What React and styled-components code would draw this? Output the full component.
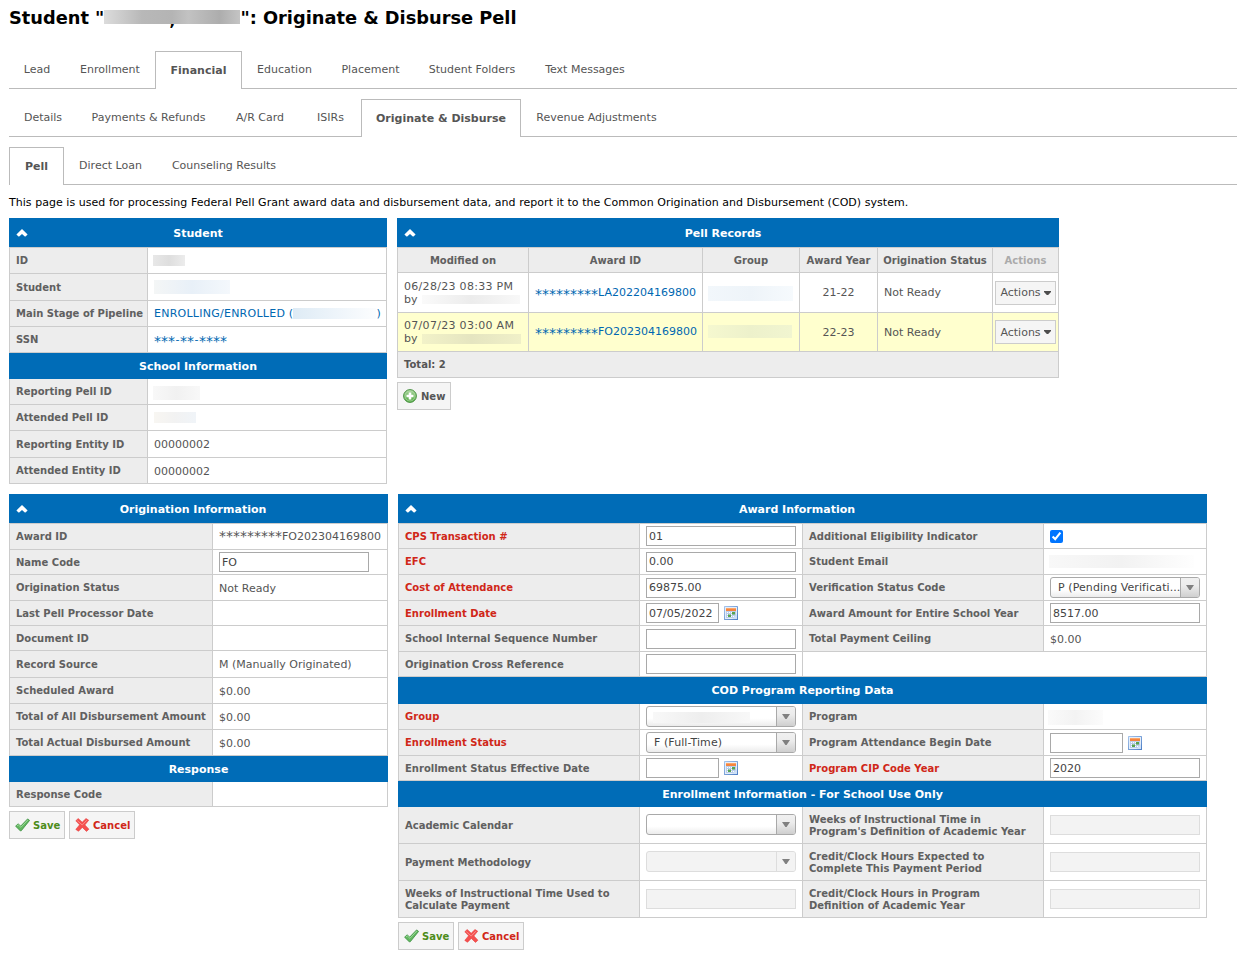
import { useState } from "react";
import styled, { createGlobalStyle, css } from "styled-components";

const mainTabs = [
	{ name: "Lead", width: 56 },
	{ name: "Enrollment", width: 90 },
	{ name: "Financial", width: 87, active: true },
	{ name: "Education", width: 85 },
	{ name: "Placement", width: 87 },
	{ name: "Student Folders", width: 116 },
	{ name: "Text Messages", width: 110 },
];

const financialTabs = [
	{ name: "Details", width: 68 },
	{ name: "Payments & Refunds", width: 143 },
	{ name: "A/R Card", width: 80 },
	{ name: "ISIRs", width: 61 },
	{ name: "Originate & Disburse", width: 160, active: true },
	{ name: "Revenue Adjustments", width: 151 },
];

const disburseTabs = [
	{ name: "Pell", width: 55, active: true },
	{ name: "Direct Loan", width: 93 },
	{ name: "Counseling Results", width: 134 },
];

const Tabs = ({ items }) => (
	<TabBar>
		{items.map((item) => (
			<Tab key={item.name} $width={item.width} $active={item.active}>
				{item.name}
			</Tab>
		))}
	</TabBar>
);

const PanelHeader = ({ title, trail = 0 }) => (
	<Header $trail={trail}>
		<Chevron viewBox="0 0 12 8">
			<path d="M6 0 11.6 5.4 9.5 7.6H8.8L6 5 3.2 7.6H2.5L.4 5.4Z" fill="#fff" />
		</Chevron>
		<HeaderTitle>{title}</HeaderTitle>
	</Header>
);

const MaskedId = ({ rest }) => (
	<>
		<Stars>*********</Stars>
		{rest}
	</>
);

const Field = ({ label, h = 26, required, children }) => (
	<Row $h={h}>
		<Label $required={required}>{label}</Label>
		<Value $text={typeof children === "string"}>{children}</Value>
	</Row>
);

const TextInput = ({ value = "", short, disabled }) => {
	const [text, setText] = useState(value);
	return (
		<Input
			type="text"
			$short={short}
			disabled={disabled}
			value={text}
			onChange={(e) => setText(e.target.value)}
		/>
	);
};

const DateInput = ({ value }) => (
	<DateGroup>
		<TextInput short value={value} />
		<svg width="14" height="14" viewBox="0 0 14 14">
			<defs>
				<linearGradient id="calEdge" x1="0" y1="0" x2="1" y2="1">
					<stop offset="0" stopColor="#a9c6ec" />
					<stop offset="1" stopColor="#4a7cc4" />
				</linearGradient>
			</defs>
			<rect width="14" height="14" rx=".6" fill="url(#calEdge)" />
			<rect x="1" y="1" width="12" height="12" fill="#e4eefa" />
			<rect x="2" y="2" width="10" height="3" fill="#f5853f" />
			<rect x="2" y="2" width="10" height="1" fill="#fba568" />
			<rect x="2" y="5" width="10" height="7" fill="#b9cdea" />
			<path
				d="M3 6h1v1H3zM5 6h1v1H5zM7 6h1v1H7zM9 6h1v1H9zM3 8h1v1H3zM5 8h1v1H5zM7 8h1v1H7zM3 10h1v1H3zM7 10h1v1H7zM9 10h1v1H9z"
				fill="#fff"
			/>
			<path d="M8 6h3v2.6H8zM4 8.4h3V11H4z" fill="#58a451" />
			<path d="M8 13 13 8v5z" fill="#cfe1f7" />
		</svg>
	</DateGroup>
);

const SelectBox = ({ disabled, children }) => (
	<Select $disabled={disabled}>
		<SelectText>{children}</SelectText>
		<SelectArrow $disabled={disabled}>
			<svg width="8" height="5" viewBox="0 0 8 5">
				<path d="M0 0h8L4.6 5H3.4Z" fill="#808080" />
			</svg>
		</SelectArrow>
	</Select>
);

const SaveCancel = () => (
	<Buttons>
		<Button $color="#4d8c1a" $width={56} $gap={2}>
			<svg width="16" height="14" viewBox="0 0 16 14">
				<path
					d="M.6 8.2 3.1 5.8l2.6 2.3L12.6.9l2 1.5L6.3 12.7H5.2Z"
					fill="#62b760"
					stroke="#3f9142"
					strokeWidth=".8"
					strokeLinejoin="round"
				/>
				<path d="M2 7.9 3.2 6.8l2.7 2.5L12.8 2" fill="none" stroke="#9ad897" />
			</svg>
			Save
		</Button>
		<Button $color="#d02718" $width={66} $gap={3}>
			<svg width="15" height="14" viewBox="0 0 15 14">
				<path
					d="M.8 2.8 3.2.5l4 3.7L11 .5l2.7 1.7-3.8 4.7 4 4.3-2.4 2.2-4.2-4L3.5 13.3.8 11.4l3.8-4.6Z"
					fill="#f5504f"
					stroke="#e8403f"
					strokeWidth=".6"
					strokeLinejoin="round"
				/>
				<path d="M2.3 2.6 7.2 7l4.6-4.8" fill="none" stroke="#fa8d8a" />
			</svg>
			Cancel
		</Button>
	</Buttons>
);

const ActionsButton = () => (
	<ActionButton>
		Actions
		<svg width="7" height="4" viewBox="0 0 7 4">
			<path d="M0 0h7v1L4.2 4H2.8L0 1Z" fill="#4d4d4d" />
		</svg>
	</ActionButton>
);

export default function App() {
	const [eligible, setEligible] = useState(true);

	return (
		<>
			<GlobalStyle />
			<Page>
				<Title>
					Student "
					<TitleMask>
						<span>,</span>
					</TitleMask>
					": Originate &amp; Disburse Pell
				</Title>
				<Tabs items={mainTabs} />
				<Tabs items={financialTabs} />
				<Tabs items={disburseTabs} />
				<Intro>
					This page is used for processing Federal Pell Grant award data and
					disbursement data, and report it to the Common Origination and
					Disbursement (COD) system.
				</Intro>

				<Columns $left={378} $gap={10}>
					<Panel>
						<PanelHeader title="Student" />
						<Body $labels={138}>
							<Field label="ID">
								<Mask $w={32} $h={11} $from="#e8e8e8" $mid="#dedede" $to="#ececec" $x={-1} $y={-1} />
							</Field>
							<Field label="Student" h={27}>
								<Mask $w={76} $h={14} $from="#f4f6f6" $mid="#e8f0f8" $to="#f4f8fc" $y={-1} />
							</Field>
							<Field label="Main Stage of Pipeline">
								<Link $spaced>ENROLLING/ENROLLED (</Link>
								<Mask $w={83} $h={11} $from="#deebf5" $mid="#edf4fa" $to="#fcfdfe" />
								<Link>)</Link>
							</Field>
							<Field label="SSN">
								<Link>
									<Stars>***</Stars>
									<Dash>-</Dash>
									<Stars>**</Stars>
									<Dash>-</Dash>
									<Stars>****</Stars>
								</Link>
							</Field>
						</Body>
						<Section>School Information</Section>
						<Body $labels={138} $plain>
							<Field label="Reporting Pell ID">
								<Mask $w={47} $h={14} $from="#f8f8f8" $mid="#f1f1f1" $to="#f8f8f8" $x={-1} $y={2} />
							</Field>
							<Field label="Attended Pell ID">
								<Mask $w={42} $h={11} $from="#f8f6f2" $mid="#f2f2f2" $to="#f0f4f8" />
							</Field>
							<Field label="Reporting Entity ID" h={27}>
								00000002
							</Field>
							<Field label="Attended Entity ID">00000002</Field>
						</Body>
					</Panel>

					<Panel $width={662}>
						<PanelHeader title="Pell Records" trail={10} />
						<Records>
							<RecordRow $h={25} $head>
								<Cell>Modified on</Cell>
								<Cell>Award ID</Cell>
								<Cell>Group</Cell>
								<Cell>Award Year</Cell>
								<Cell>Origination Status</Cell>
								<Cell $muted>Actions</Cell>
							</RecordRow>
							<RecordRow $h={40}>
								<Cell $left>
									<div>
										<Stamp>06/28/23 08:33 PM</Stamp>
										<By>
											by <Mask $w={98} $h={9} $from="#fafafa" $mid="#ececec" $to="#f8f8f8" />
										</By>
									</div>
								</Cell>
								<Cell $left>
									<Link>
										<MaskedId rest="LA202204169800" />
									</Link>
								</Cell>
								<Cell $left>
									<Mask $w={85} $h={15} $from="#f2f7fb" $mid="#eef4f9" $to="#f6fafd" $x={-1} $y={2} />
								</Cell>
								<Cell>21-22</Cell>
								<Cell $left>Not Ready</Cell>
								<Cell>
									<ActionsButton />
								</Cell>
							</RecordRow>
							<RecordRow $h={39} $current>
								<Cell $left>
									<div>
										<Stamp>07/07/23 03:00 AM</Stamp>
										<By>
											by <Mask $w={99} $h={10} $from="#f2f2c8" $mid="#e5e5c0" $to="#f0f0c8" />
										</By>
									</div>
								</Cell>
								<Cell $left>
									<Link>
										<MaskedId rest="FO202304169800" />
									</Link>
								</Cell>
								<Cell $left>
									<Mask $w={84} $h={13} $from="#f5f8cf" $mid="#edf1cb" $to="#f1f5d0" $x={-1} $y={-2} />
								</Cell>
								<Cell>22-23</Cell>
								<Cell $left>Not Ready</Cell>
								<Cell>
									<ActionsButton />
								</Cell>
							</RecordRow>
							<TotalRow>Total: 2</TotalRow>
						</Records>
						<Buttons>
							<Button $color="#555" $width={54} $gap={4}>
								<svg width="14" height="14" viewBox="0 0 14 14">
									<defs>
										<linearGradient id="addFill" x1="0" y1="0" x2="0" y2="1">
											<stop offset="0" stopColor="#a9d49c" />
											<stop offset="1" stopColor="#4ba63d" />
										</linearGradient>
									</defs>
									<circle cx="7" cy="7" r="6.4" fill="url(#addFill)" stroke="#4c9345" />
									<circle cx="7" cy="7" r="5" fill="none" stroke="#b6deaa" strokeWidth=".7" />
									<path d="M5.7 3.5h2.6v2.2h2.2v2.6H8.3v2.2H5.7V8.3H3.5V5.7h2.2Z" fill="#fff" />
								</svg>
								New
							</Button>
						</Buttons>
					</Panel>
				</Columns>

				<Columns $left={379} $gap={10}>
					<Panel>
						<PanelHeader title="Origination Information" trail={11} />
						<Body $labels={203}>
							<Field label="Award ID">
								<MaskedId rest="FO202304169800" />
							</Field>
							<Field label="Name Code" h={25}>
								<TextInput value="FO" />
							</Field>
							<Field label="Origination Status">Not Ready</Field>
							<Field label="Last Pell Processor Date" h={25} />
							<Field label="Document ID" h={25} />
							<Field label="Record Source" h={27}>
								M (Manually Originated)
							</Field>
							<Field label="Scheduled Award">$0.00</Field>
							<Field label="Total of All Disbursement Amount">$0.00</Field>
							<Field label="Total Actual Disbursed Amount">$0.00</Field>
						</Body>
						<Section>Response</Section>
						<Body $labels={203} $plain>
							<Field label="Response Code" h={25} />
						</Body>
						<SaveCancel />
					</Panel>

					<Panel $width={809}>
						<PanelHeader title="Award Information" trail={11} />
						<Body $double>
							<Row $h={25}>
								<Label $required>CPS Transaction #</Label>
								<Value>
									<TextInput value="01" />
								</Value>
								<Label>Additional Eligibility Indicator</Label>
								<Value>
									<Checkbox
										type="checkbox"
										checked={eligible}
										onChange={(e) => setEligible(e.target.checked)}
									/>
								</Value>
							</Row>
							<Row $h={26}>
								<Label $required>EFC</Label>
								<Value>
									<TextInput value="0.00" />
								</Value>
								<Label>Student Email</Label>
								<Value>
									<Mask $w={145} $h={13} $from="#f8f8f8" $mid="#f2f2f2" $to="#fefefe" $x={-1} />
								</Value>
							</Row>
							<Row $h={26}>
								<Label $required>Cost of Attendance</Label>
								<Value>
									<TextInput value="69875.00" />
								</Value>
								<Label>Verification Status Code</Label>
								<Value>
									<SelectBox>P (Pending Verificati...</SelectBox>
								</Value>
							</Row>
							<Row $h={25}>
								<Label $required>Enrollment Date</Label>
								<Value>
									<DateInput value="07/05/2022" />
								</Value>
								<Label>Award Amount for Entire School Year</Label>
								<Value>
									<TextInput value="8517.00" />
								</Value>
							</Row>
							<Row $h={26}>
								<Label>School Internal Sequence Number</Label>
								<Value>
									<TextInput />
								</Value>
								<Label>Total Payment Ceiling</Label>
								<Value $text>$0.00</Value>
							</Row>
							<Row $h={25}>
								<Label>Origination Cross Reference</Label>
								<Value>
									<TextInput />
								</Value>
								<Blank />
							</Row>
						</Body>
						<Section $h={27}>COD Program Reporting Data</Section>
						<Body $double $plain>
							<Row $h={26}>
								<Label $required>Group</Label>
								<Value>
									<SelectBox>
										<Mask $w={97} $h={11} $from="#f8f8f8" $mid="#eeeeee" $to="#f8f8f8" $x={-1} $y={1} />
									</SelectBox>
								</Value>
								<Label>Program</Label>
								<Value>
									<Mask $w={55} $h={15} $from="#fafafa" $mid="#f3f3f3" $to="#fcfcfc" $x={-2} $y={1} />
								</Value>
							</Row>
							<Row $h={26}>
								<Label $required>Enrollment Status</Label>
								<Value>
									<SelectBox>F (Full-Time)</SelectBox>
								</Value>
								<Label>Program Attendance Begin Date</Label>
								<Value>
									<DateInput />
								</Value>
							</Row>
							<Row $h={25}>
								<Label>Enrollment Status Effective Date</Label>
								<Value>
									<DateInput />
								</Value>
								<Label $required>Program CIP Code Year</Label>
								<Value>
									<TextInput value="2020" />
								</Value>
							</Row>
						</Body>
						<Section>Enrollment Information - For School Use Only</Section>
						<Body $double $plain>
							<Row $h={37}>
								<Label>Academic Calendar</Label>
								<Value>
									<SelectBox />
								</Value>
								<Label>
									Weeks of Instructional Time in
									<br />
									Program's Definition of Academic Year
								</Label>
								<Value>
									<TextInput disabled />
								</Value>
							</Row>
							<Row $h={37}>
								<Label>Payment Methodology</Label>
								<Value>
									<SelectBox disabled />
								</Value>
								<Label>
									Credit/Clock Hours Expected to
									<br />
									Complete This Payment Period
								</Label>
								<Value>
									<TextInput disabled />
								</Value>
							</Row>
							<Row $h={37}>
								<Label>
									Weeks of Instructional Time Used to
									<br />
									Calculate Payment
								</Label>
								<Value>
									<TextInput disabled />
								</Value>
								<Label>
									Credit/Clock Hours in Program
									<br />
									Definition of Academic Year
								</Label>
								<Value>
									<TextInput disabled />
								</Value>
							</Row>
						</Body>
						<SaveCancel />
					</Panel>
				</Columns>
			</Page>
		</>
	);
}

const GlobalStyle = createGlobalStyle`
	* {
		box-sizing: border-box;
	}
	body {
		margin: 0;
		background: #fff;
		overflow: hidden;
		font-family: Verdana, "DejaVu Sans", sans-serif;
		font-size: 11px;
		color: #555;
	}
`;

const Page = styled.main`
	height: 956px;
	padding-left: 9px;
	overflow: hidden;
`;

const Title = styled.h1`
	display: flex;
	align-items: center;
	height: 35px;
	margin: 0 0 16px;
	font-size: 17.8px;
	line-height: 35px;
	color: #000;
	white-space: pre;
`;

const TitleMask = styled.span`
	position: relative;
	width: 136px;
	height: 14px;
	margin-bottom: 1px;
	background: linear-gradient(90deg, #dcdcdc, #b8b8b8 28%, #b4b4b4 50%, #c2c2c2 62%, #adadad 85%, #c4c4c4);
	span {
		position: absolute;
		left: 65px;
		top: 10px;
		height: 8px;
		font-size: 15px;
		line-height: 2px;
		clip-path: inset(4px 0 -4px 0);
	}
`;

const TabBar = styled.nav`
	display: flex;
	align-items: flex-end;
	height: 38px;
	margin-bottom: 10px;
	box-shadow: inset 0 -1px #bbb;
`;

const Tab = styled.a`
	display: flex;
	justify-content: center;
	align-items: center;
	width: ${(p) => p.$width}px;
	height: 38px;
	padding-bottom: 1px;
	white-space: nowrap;
	color: #555;
	${(p) =>
		p.$active &&
		css`
			padding-bottom: 0;
			border: 1px solid #bbb;
			border-bottom: 0;
			background: #fff;
			font-weight: bold;
		`}
`;

const Intro = styled.p`
	height: 23px;
	margin: 0;
	line-height: 16px;
	letter-spacing: 0.04px;
	color: #000;
	white-space: nowrap;
`;

const Columns = styled.div`
	display: grid;
	grid-template-columns: ${(p) => p.$left}px max-content;
	column-gap: ${(p) => p.$gap}px;
	align-items: start;
	margin-bottom: 10px;
`;

const Panel = styled.section`
	width: ${(p) => (p.$width ? `${p.$width}px` : "100%")};
`;

const Header = styled.header`
	display: grid;
	grid-template-columns: 26px 1fr 26px;
	align-items: center;
	height: 29px;
	padding-right: ${(p) => p.$trail}px;
	background: #006cb7;
	color: #fff;
	font-weight: bold;
	text-align: center;
`;

const HeaderTitle = styled.span`
	padding-top: 1px;
`;

const Chevron = styled.svg`
	width: 12px;
	height: 8px;
	margin-left: 7px;
`;

const Section = styled.div`
	height: ${(p) => p.$h || 26}px;
	line-height: 27px;
	background: #006cb7;
	color: #fff;
	font-weight: bold;
	text-align: center;
`;

const Row = styled.div`
	display: grid;
	height: ${(p) => p.$h}px;
	border-bottom: 1px solid #ccc;
`;

const Body = styled.div`
	border: 1px solid #ccc;
	border-bottom: 0;
	${(p) => p.$plain && "border-top: 0;"}
	${Row} {
		grid-template-columns: ${(p) =>
			p.$double ? "241px 163px 241px 162px" : `${p.$labels}px 1fr`};
	}
`;

const Label = styled.div`
	display: flex;
	align-items: center;
	padding: 1px 0 0 6px;
	background: #ededed;
	color: ${(p) => (p.$required ? "#d02718" : "#606060")};
	font-size: 10px;
	font-weight: bold;
	line-height: 12px;
	white-space: nowrap;
`;

const Value = styled.div`
	display: flex;
	align-items: center;
	padding: ${(p) => (p.$text ? 1 : 0)}px 0 0 6px;
	border-left: 1px solid #ccc;
	white-space: pre;
	margin-left: -1px;
	& + ${Label} {
		border-left: 1px solid #ccc;
		margin-left: -1px;
	}
`;

const Blank = styled.div`
	grid-column: span 2;
	margin-left: -1px;
	border-left: 1px solid #ccc;
`;

const Mask = styled.span`
	display: inline-block;
	flex: none;
	width: ${(p) => p.$w}px;
	height: ${(p) => p.$h}px;
	margin: ${(p) => p.$y || 0}px 0 0 ${(p) => p.$x || 0}px;
	background: linear-gradient(90deg, ${(p) => p.$from}, ${(p) => p.$mid} 50%, ${(p) => p.$to});
`;

const Link = styled.a`
	color: #0067b1;
	${(p) => p.$spaced && "letter-spacing: 0.25px;"}
`;

const Stars = styled.span`
	font-size: 14px;
	line-height: 11px;
	vertical-align: -3px;
`;

const Dash = styled.span`
	padding: 0 0.5px;
`;

const Records = styled.div`
	border: 1px solid #ccc;
`;

const RecordRow = styled.div`
	display: grid;
	grid-template-columns: 131px 174px 97px 78px 115px 65px;
	height: ${(p) => p.$h}px;
	border-bottom: 1px solid #ccc;
	background: ${(p) => (p.$head ? "#ededed" : p.$current ? "#ffffce" : "#fff")};
	${(p) =>
		p.$head &&
		css`
			font-size: 10px;
			font-weight: bold;
			color: #606060;
		`}
`;

const Cell = styled.div`
	display: flex;
	justify-content: ${(p) => (p.$left ? "flex-start" : "center")};
	align-items: center;
	padding-left: ${(p) => (p.$left ? 6 : 0)}px;
	border-right: 1px solid #ccc;
	line-height: 13px;
	white-space: nowrap;
	${(p) => p.$muted && "color: #aaa;"}
	&:last-child {
		border-right: 0;
	}
`;

const Stamp = styled.div`
	letter-spacing: 0.3px;
`;

const By = styled.div`
	display: flex;
	align-items: center;
	gap: 4px;
`;

const TotalRow = styled.div`
	height: 25px;
	padding-left: 6px;
	line-height: 26px;
	background: #ededed;
	font-size: 10px;
	font-weight: bold;
`;

const Buttons = styled.div`
	display: flex;
	gap: 4px;
	margin-top: 4px;
`;

const Button = styled.button`
	display: flex;
	align-items: center;
	gap: ${(p) => p.$gap}px;
	width: ${(p) => p.$width}px;
	height: 28px;
	padding: 0 0 0 5px;
	border: 1px solid #ccc;
	background: #f5f5f5;
	color: ${(p) => p.$color};
	font-family: inherit;
	font-size: 10px;
	font-weight: bold;
	svg {
		flex: none;
	}
`;

const ActionButton = styled.button`
	display: flex;
	justify-content: center;
	align-items: center;
	gap: 3px;
	width: 61px;
	height: 24px;
	padding: 0;
	border: 1px solid #ccc;
	background: #f5f5f5;
	color: #555;
	font: inherit;
`;

const Input = styled.input`
	width: ${(p) => (p.$short ? 73 : 150)}px;
	height: 20px;
	padding: 0 2px;
	border: 1px solid #a9a9a9;
	border-radius: 0;
	background: #fff;
	color: #444;
	font: inherit;
	&:disabled {
		border-color: #ddd;
		background: #f3f3f3;
	}
`;

const DateGroup = styled.div`
	display: flex;
	align-items: center;
	gap: 5px;
`;

const Checkbox = styled.input`
	width: 13px;
	height: 13px;
	margin: 0;
`;

const Select = styled.div`
	display: flex;
	width: 150px;
	height: 21px;
	margin-bottom: 1px;
	border: 1px solid ${(p) => (p.$disabled ? "#ddd" : "#a9a9a9")};
	border-radius: 3px;
	background: ${(p) =>
		p.$disabled ? "#f3f3f3" : "linear-gradient(#fff 60%, #ececec)"};
	overflow: hidden;
`;

const SelectText = styled.span`
	display: flex;
	align-items: center;
	flex: 1;
	padding: 1px 0 0 7px;
	letter-spacing: 0.08px;
	color: #444;
`;

const SelectArrow = styled.span`
	display: flex;
	justify-content: center;
	align-items: center;
	width: 19px;
	border-left: 1px solid ${(p) => (p.$disabled ? "#ddd" : "#a9a9a9")};
	background: ${(p) =>
		p.$disabled ? "#f3f3f3" : "linear-gradient(#f0f0f0, #ececec 40%, #cfcfcf)"};
`;
